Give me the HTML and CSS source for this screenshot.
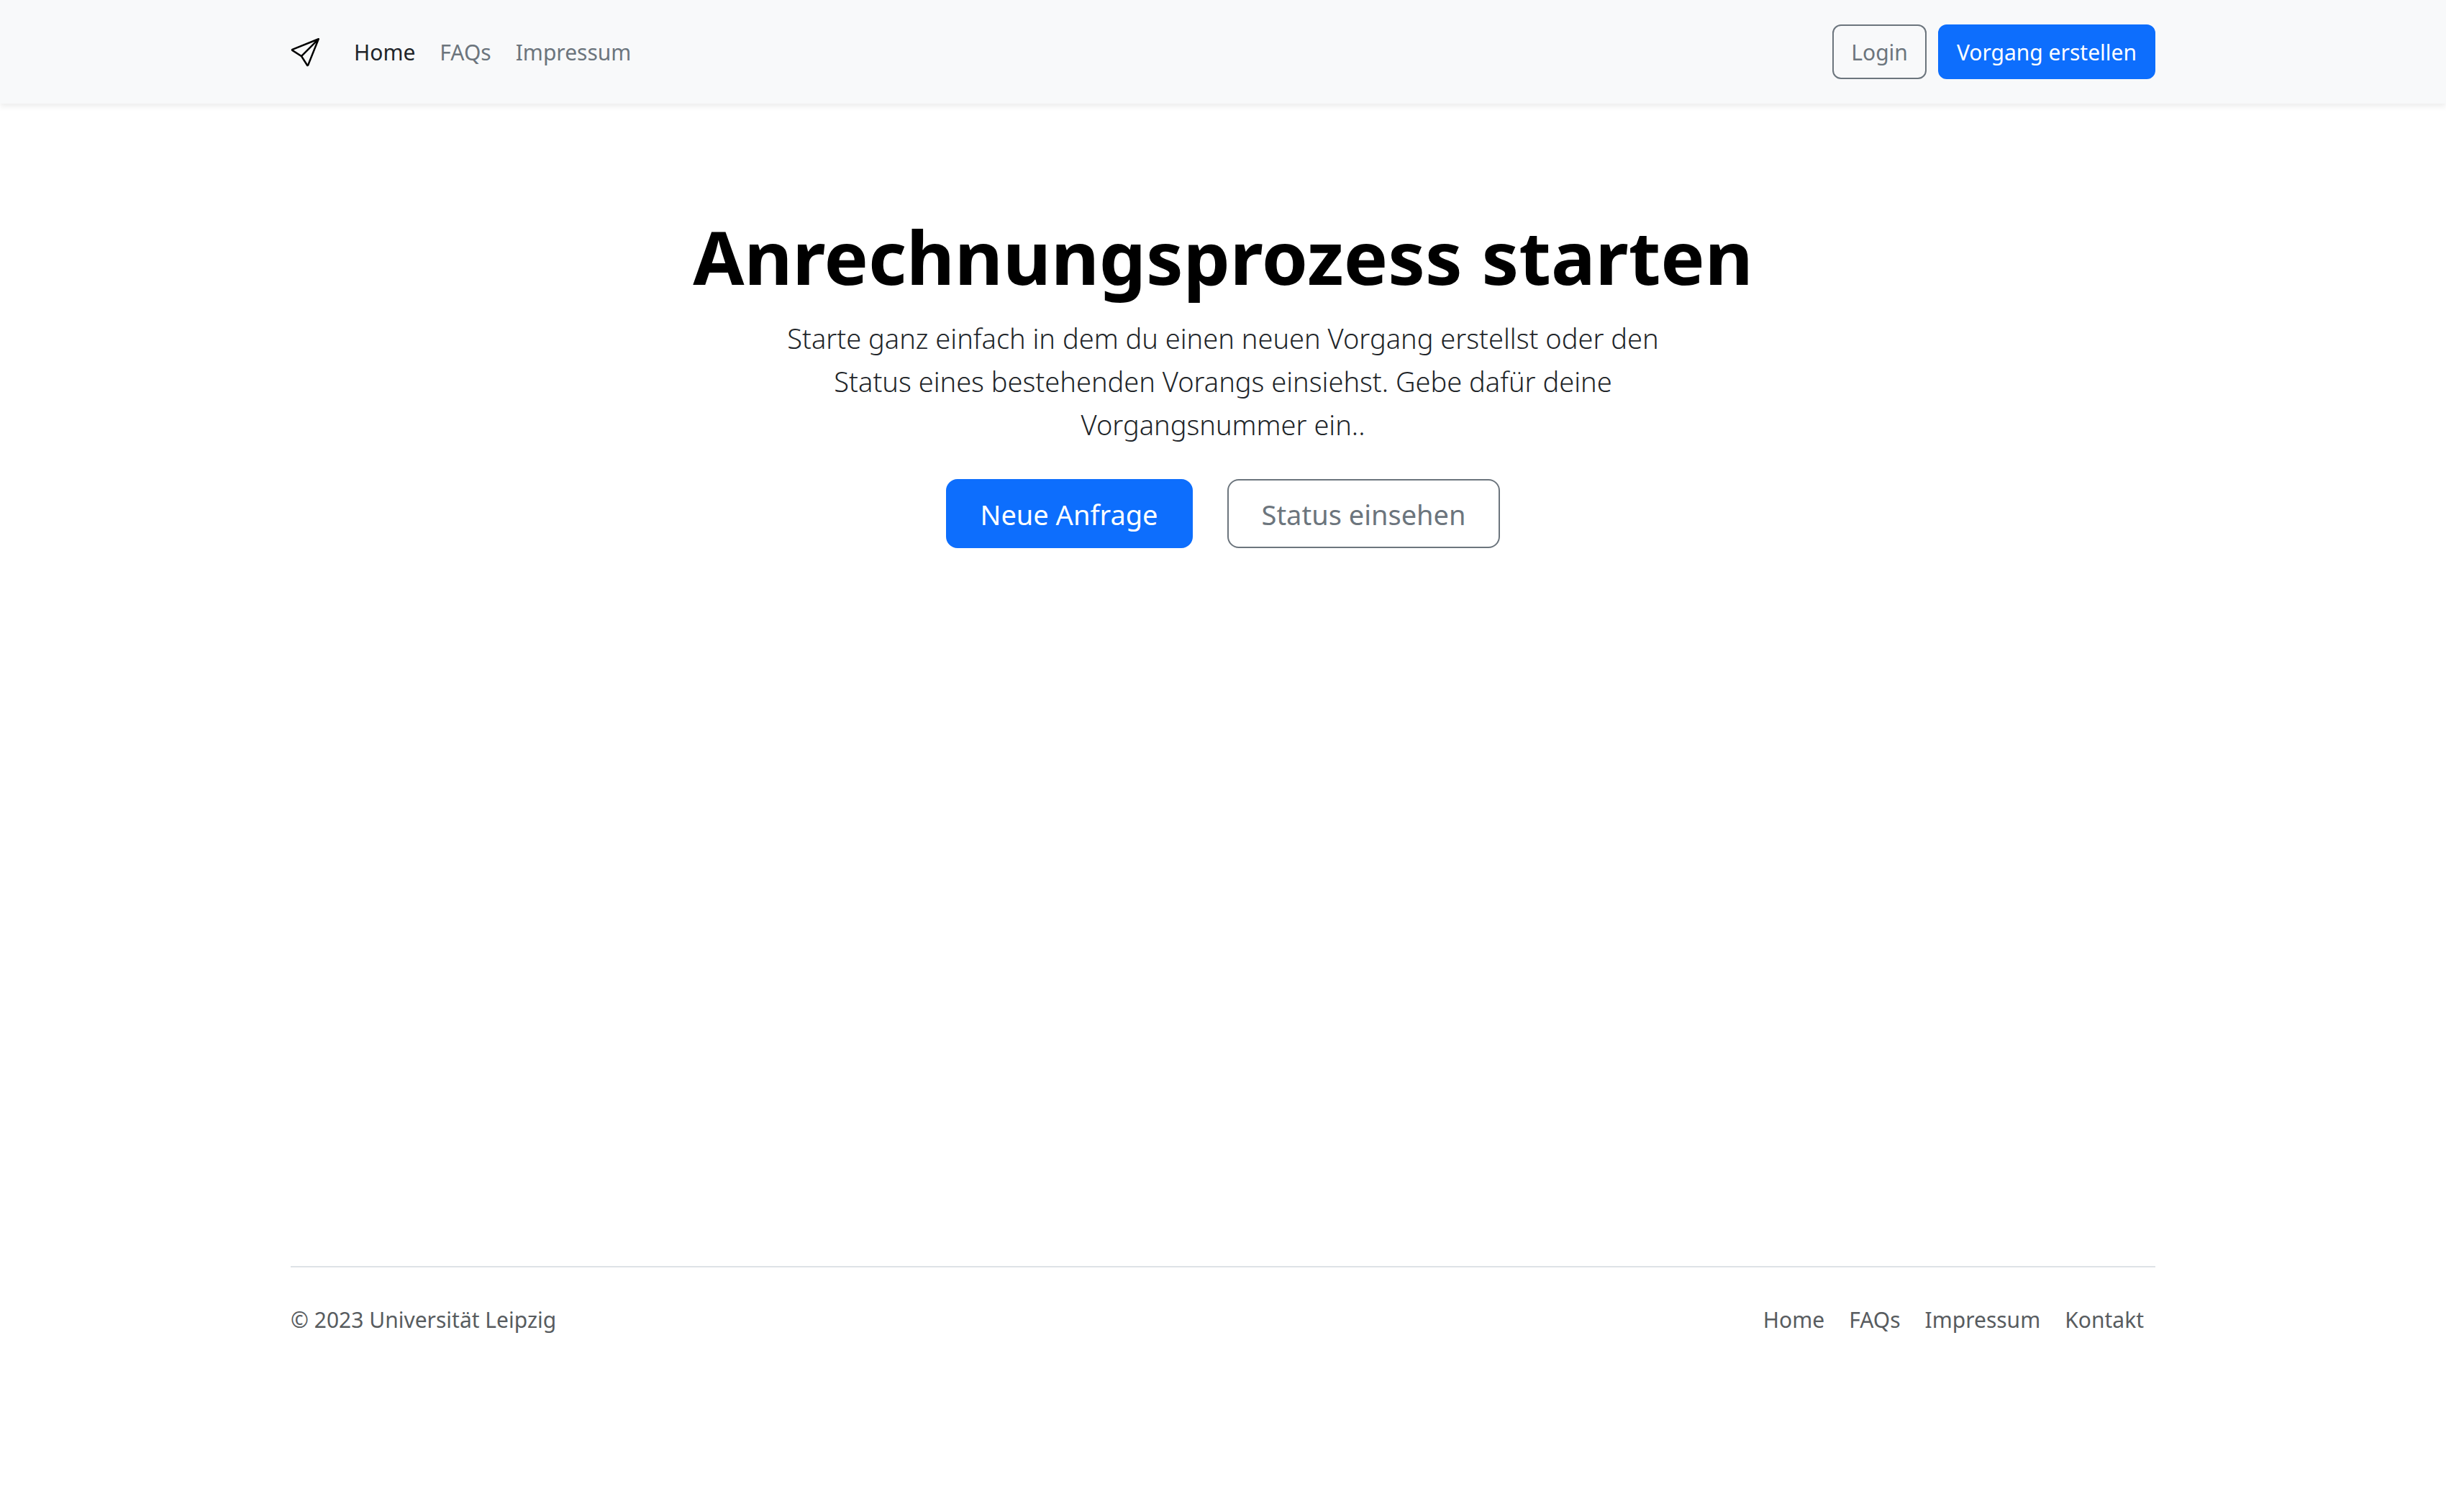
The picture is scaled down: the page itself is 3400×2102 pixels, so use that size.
FILE: index.html
```html
<!DOCTYPE html>
<html lang="de">
<head>
  <meta charset="utf-8">
  <meta name="viewport" content="width=device-width, initial-scale=1">
  <title>Anrechnungsprozess</title>
  <link rel="stylesheet" href="styles.css">
</head>
<body>
  <header class="site-header">
    <div class="container header-row">
      <a class="brand" href="#" aria-label="Startseite">
        <svg class="brand-icon" viewBox="0 0 16 16" fill="currentColor" aria-hidden="true">
          <path d="M15.854.146a.5.5 0 0 1 .11.54l-5.819 14.547a.75.75 0 0 1-1.329.124l-3.178-4.995L.643 7.184a.75.75 0 0 1 .124-1.33L15.314.037a.5.5 0 0 1 .54.11ZM6.636 10.07l2.761 4.338L14.13 2.576 6.636 10.07Zm6.787-8.201L1.591 6.602l4.339 2.76 7.494-7.493Z"/>
        </svg>
      </a>
      <nav class="nav">
        <a class="nav-link active" href="#">Home</a>
        <a class="nav-link" href="#">FAQs</a>
        <a class="nav-link" href="#">Impressum</a>
      </nav>
      <div class="header-actions">
        <button type="button" class="btn btn-outline">Login</button>
        <button type="button" class="btn btn-primary">Vorgang erstellen</button>
      </div>
    </div>
  </header>

  <main class="hero">
    <h1 class="hero-title">Anrechnungsprozess starten</h1>
    <p class="hero-lead">Starte ganz einfach in dem du einen neuen Vorgang erstellst oder den Status eines bestehenden Vorangs einsiehst. Gebe dafür deine Vorgangsnummer ein..</p>
    <div class="hero-actions">
      <button type="button" class="btn btn-lg btn-primary">Neue Anfrage</button>
      <button type="button" class="btn btn-lg btn-outline">Status einsehen</button>
    </div>
  </main>

  <div class="container">
    <footer class="site-footer">
      <p class="copyright">© 2023 Universität Leipzig</p>
      <nav class="nav footer-nav">
        <a class="nav-link" href="#">Home</a>
        <a class="nav-link" href="#">FAQs</a>
        <a class="nav-link" href="#">Impressum</a>
        <a class="nav-link" href="#">Kontakt</a>
      </nav>
    </footer>
  </div>
</body>
</html>
```

FILE: styles.css
```css
* {
  box-sizing: border-box;
}

body {
  margin: 0;
  background: #fff;
  color: #212529;
  font-family: "Noto Sans", "Liberation Sans", sans-serif;
  font-size: 30px;
  line-height: 48px;
  min-height: 100vh;
  display: flex;
  flex-direction: column;
}

.container {
  width: 100%;
  max-width: 2640px;
  margin: 0 auto;
  padding: 0 24px;
}

.site-header {
  padding: 32px 0;
  background: #f8f9fa;
  box-shadow: 0 4px 8px rgba(0, 0, 0, 0.075);
}

.header-row {
  display: flex;
  align-items: center;
}

.brand {
  display: flex;
  padding-top: 2px;
  margin-right: 32px;
  color: #000;
}

.brand-icon {
  width: 40px;
  height: 40px;
}

.nav {
  display: flex;
  gap: 2px;
}

.nav-link {
  padding: 17px 16px 15px;
  color: #6c757d;
  text-decoration: none;
}

.nav-link.active {
  color: #212529;
}

.header-actions {
  display: flex;
  gap: 16px;
  margin-left: auto;
}

.btn {
  padding: 13px 24px 11px;
  border: 2px solid transparent;
  border-radius: 12px;
  font: inherit;
  white-space: nowrap;
  cursor: pointer;
}

.btn-primary {
  background: #0d6efd;
  border-color: #0d6efd;
  color: #fff;
}

.btn-outline {
  background: transparent;
  border-color: #6c757d;
  color: #6c757d;
}

.btn-lg {
  padding: 17px 46px 15px;
  border-radius: 16px;
  font-size: 38px;
  line-height: 60px;
}

.hero {
  flex: 1;
  padding: 144px 24px 0;
  text-align: center;
}

.hero-title {
  margin: 0 0 16px;
  color: #000;
  font-size: 103px;
  font-weight: 700;
  line-height: 136px;
}

.hero-lead {
  max-width: 1248px;
  margin: 0 auto 46px;
  font-size: 38px;
  font-weight: 300;
  line-height: 60px;
}

.hero-actions {
  display: flex;
  justify-content: center;
  gap: 48px;
}

.site-footer {
  display: flex;
  align-items: center;
  justify-content: space-between;
  margin-bottom: 196px;
  padding: 32px 0;
  border-top: 2px solid #dee2e6;
}

.copyright {
  margin: 0;
  padding: 17px 0 15px;
  color: #585c5f;
}

.footer-nav .nav-link {
  color: #585c5f;
}
```
